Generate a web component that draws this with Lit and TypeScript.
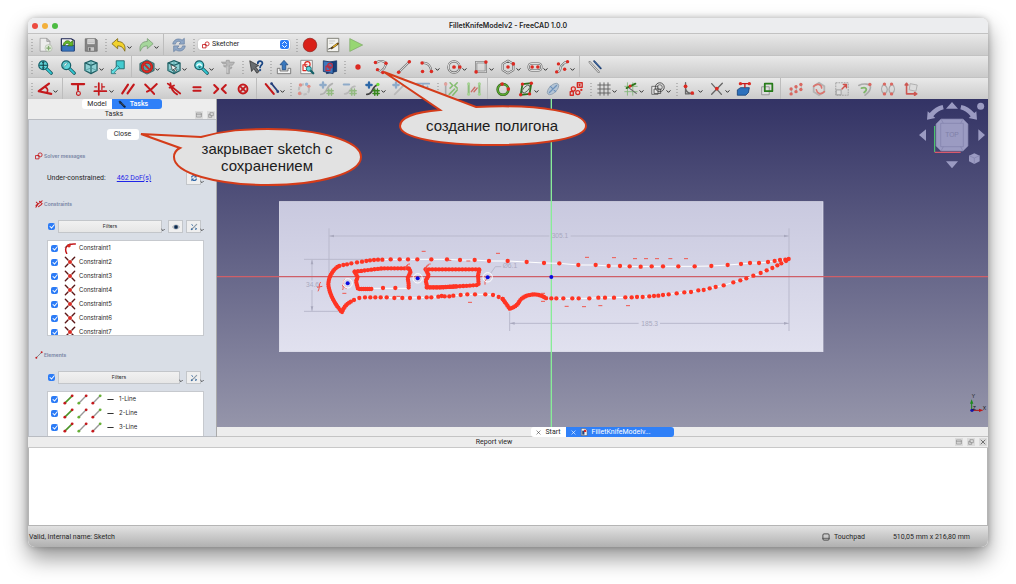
import { LitElement, html, svg, css, TemplateResult, SVGTemplateResult } from "lit";
import { customElement, property } from "lit/decorators.js";

type Glyph = SVGTemplateResult;

const RED = "#c4191c";
const DOT = "#dc2a22";
const INK = "#3a3a3a";

const stroke = (d: string, color = INK, w = 1.2): Glyph =>
  svg`<path d=${d} fill="none" stroke=${color} stroke-width=${w} stroke-linecap="round" stroke-linejoin="round"/>`;
const shape = (d: string, fill: string, line = "none", w = 0.7): Glyph =>
  svg`<path d=${d} fill=${fill} stroke=${line} stroke-width=${w} stroke-linejoin="round"/>`;
const dots = (pts: number[][], r = 1.7, fill = DOT): Glyph =>
  svg`${pts.map(([x, y]) => svg`<circle cx=${x} cy=${y} r=${r} fill=${fill}/>`)}`;
const tube = (d: string, core = "#dedede"): Glyph => svg`${stroke(d, "#5c5c5c", 2.4)}${stroke(d, core, 1.2)}`;
const lens = (inner: Glyph): Glyph => svg`
  ${stroke("M10.5 10.5L16 16", "#155a60", 3.6)}${stroke("M10.8 10.8L15.8 15.8", "#32c9d4", 2)}
  <circle cx="7" cy="7" r="5" fill="#5fd5da" stroke="#176069" stroke-width="1.4"/>${inner}`;
const hashes = (x: number, y: number, c: string): Glyph =>
  stroke(`M${x + 2} ${y}v7M${x + 5} ${y}v7M${x} ${y + 2}h7M${x} ${y + 5}h7`, c, 1.6);
const plus = (c: string): Glyph => stroke("M4.5 1.5v6M1.5 4.5h6", c, 2.6);
const cube: Glyph = svg`${shape("M9 1.8L15.8 4.5V13L9 16.400L2.200 13V4.500Z", "#8fd0d3", "#1f5f64", 1.4)}
  ${stroke("M2.5 4.5L9 7.200L15.5 4.5M9 7.200V16", "#1f5f64", 1.3)}${stroke("M2.500 12.800L9 10L15.500 12.800M9 2V10", "#4a9599", 0.8)}`;

const glyphs: Record<string, Glyph> = {
  new: svg`${shape("M3.5 1.500H11L14.5 5V16H3.5Z", "#ececec", "#8b8b8b")}${shape("M11 1.500V5H14.5Z", "#c9c9c9", "#8b8b8b")}
    <circle cx="13" cy="12.5" r="4" fill="#dfe8da" stroke="#9aa895" stroke-width=".5"/>${stroke("M13 10.5v4M11 12.5h4", "#7fa86c", 1.4)}`,
  open: svg`${shape("M1.500 2H12.500L16 4V15H1.500Z", "#f4f4f4", "#1b2350", 1.3)}${shape("M2 9.500H16V16H2Z", "#3874bd", "#173a75")}
    ${shape("M3.500 9.500C4 4 9.500 2.500 12 6L14.500 4V10H8.500L10.500 8C8.500 6.500 6 7 5.500 9.500Z", "#62b827", "#2b6010")}`,
  save: svg`${shape("M2.500 2H14.500L16 3.500V16H2.500Z", "#858585", "#5f5f5f")}${shape("M4.500 2H13.500V8.500H4.500Z", "#e6e6e6", "#777777")}
    ${shape("M5 11H13V16H5Z", "#c8c8c8", "#6b6b6b")}${shape("M6.500 12H8.500V15.500H6.500Z", "#666")}${stroke("M6 4.500h6M6 6.500h6", "#999", 0.7)}`,
  undo: shape("M1 7.500L7.500 1.800V5C13 5 17 8.500 15.500 16C13.500 11.500 11.500 10 7.500 10V13.200Z", "#f2d22c", "#7a6410", 0.9),
  redo: shape("M17 7.500L10.500 1.800V5C5 5 1 8.500 2.500 16C4.500 11.500 6.500 10 10.500 10V13.200Z", "#a5d69b", "#7b9e76", 0.9),
  refresh: svg`${shape("M2 8C2.500 3 8 .5 12.500 3.500L15 1.500V8H9L11 5.800C8.500 4 5.500 5 5 8Z", "#8fa7c6", "#60799c")}
    ${shape("M16 10C15.500 15 10 17.500 5.500 14.500L3 16.500V10H9L7 12.200C9.500 14 12.500 13 13 10Z", "#8fa7c6", "#60799c")}`,
  update: svg`${shape("M2 8C2.500 3 8 .5 12.500 3.500L15 1.500V8H9L11 5.800C8.500 4 5.500 5 5 8Z", "#2f66a8")}
    ${shape("M16 10C15.500 15 10 17.500 5.500 14.500L3 16.500V10H9L7 12.200C9.500 14 12.500 13 13 10Z", "#2f66a8")}`,
  record: svg`<circle cx="9" cy="9" r="7.600" fill="#d92018" stroke="#8f1d18" stroke-width=".8"/>`,
  macro: svg`${shape("M2.500 1.500H15.500V16.500H2.500Z", "#f2f2ee", "#77776f", 1)}${stroke("M5 4.500h6M5 7h4", "#aaa", 0.7)}
    ${stroke("M7.500 12.500L14.500 7.500", "#6b4c16", 2.400)}${stroke("M9.500 11L13 8.500", "#e5b32c", 1.200)}${stroke("M4 13.500L8 12", "#333", 1)}`,
  play: shape("M2 1.800L16.500 9L2 16.200Z", "#97d672", "#7fa96a", 0.8),
  fit: lens(svg`${stroke("M7 3.200V10.800M3.200 7H10.800", "#123f45", 1.200)}${stroke("M5.900 4.300L7 3.200L8.100 4.300M5.900 9.700L7 10.800L8.100 9.700", "#123f45", 0.9)}`),
  zoomsel: lens(svg`${shape("M4 10L5 5L9.500 4Z", "#e9fbfb", "#1c747a", 0.6)}`),
  iso: cube,
  link: svg`${shape("M7 2H16V11H7Z", "#43cbd0", "#1a6368", 1)}${shape("M1.500 16.500V11.500L3 13L8.500 7.500L10.500 9.500L5 15L6.500 16.500Z", "#63e1e5", "#1a6368", 0.8)}`,
  nodraw: svg`${shape("M9 1L17 5V13L9 17L1 13V5Z", "#4c8d90", "#1c4d50", 0.8)}<circle cx="9" cy="9" r="5.400" fill="#58a3a5" stroke="#8c1515" stroke-width="2.800"/>
    <circle cx="9" cy="9" r="5.400" fill="none" stroke="#dd2a22" stroke-width="1.900"/>${stroke("M5.500 5.500L12.500 12.500", "#d6241f", 2)}`,
  box: svg`${cube}${shape("M5.500 6.500L12 9.500L9.700 10.300L12 13L10.700 14L8.600 11.300L7.300 13.200Z", "#f3f3f3", "#222", 0.7)}`,
  look: lens(svg`${stroke("M4.500 7.500C6 5 8.500 5 9.500 7.500", "#f2ffff", 1.500)}${shape("M5.500 8.500H9.500L7.500 10.500Z", "#14565b")}`),
  caliper: svg`${shape("M7 1.500H10.500V3.500H16V4.500L14 7H10.500V9H13.500L12.500 11H10.500V16.500H7.500V9H5L4 7.500H7.500V5.500H3.500L1.500 3.500H7Z", "#b9b9b9", "#939393")}${stroke("M8 9V15", "#dedede", 0.9)}`,
  help: svg`${shape("M2 2L12 7.500L8.500 8.800L12.500 14L10 16L6.500 10.800L4 14Z", "#686c70", "#333", 0.9)}
    ${stroke("M11 5C11 1.500 16.200 1.500 16.200 4.700C16.200 7 13.600 7 13.600 9.500", "#1a4683", 2)}${dots([[13.6, 12.5]], 1.3, "#1a4683")}`,
  leave: svg`${shape("M1.500 10.500H4.500V13.500H13.500V10.500H16.500V16.500H1.500Z", "#f1f1f1", "#666", 0.9)}
    ${shape("M9 1.500L13.500 6.500H11V12H7V6.500H4.500Z", "#3a78bd", "#1d467c", 0.8)}`,
  viewsketch: svg`${shape("M2 1.500H15V16.500H2Z", "#f7f7f7", "#777", 0.9)}<circle cx="9.500" cy="6" r="3" fill="none" stroke=${DOT} stroke-width="1.300"/>
    ${stroke("M9 6.500H4.500V13H8", DOT, 1.3)}${stroke("M12.500 12.500L16 16", "#156068", 2.600)}<circle cx="11" cy="11" r="2.800" fill="#5bd3d8" stroke="#176069"/>`,
  section: svg`${shape("M5 4L16.500 2V14L5 16.500Z", "#17407c", "#102d60", 0.8)}${shape("M1.500 2L12.500 4V16.500L1.500 14Z", "#3f78bd", "#102d60", 0.9)}
    <circle cx="9" cy="7.500" r="2.600" fill="none" stroke="#c62a3a" stroke-width="1.400"/>${stroke("M4.500 8V13H9V8Z", "#c62a3a", 1.300)}`,
  point: dots([[9, 9]], 3),
  polyline: svg`${tube("M3.500 4.500C7 1 12 2 15 5L12.500 10.500L9 14L5 12")}${dots([[2.7, 4], [14.6, 4.800], [5, 12], [11, 15.200]], 1.9)}`,
  line: svg`${tube("M3 15L15 3")}${dots([[3, 15], [15, 3]], 2)}`,
  arc: svg`${tube("M3.500 4.500C10 3.500 13.500 8 14 14")}${dots([[3.500, 4.500], [4, 14], [14, 14]], 2)}`,
  circle: svg`<circle cx="9" cy="9" r="6.400" fill="none" stroke="#5c5c5c" stroke-width="2.400"/><circle cx="9" cy="9" r="6.400" fill="none" stroke="#dedede" stroke-width="1.200"/>${dots([[9, 9], [15.5, 9]], 2.1)}`,
  rect: svg`${tube("M3.500 3.500H14.500V14.500H3.500Z")}${dots([[14.500, 3.500], [3.500, 14.500]], 2)}`,
  hexagon: svg`${tube("M9 2L15 5.500V12.500L9 16L3 12.500V5.500Z")}${dots([[9, 9], [15, 5.500]], 2)}`,
  slot: svg`${tube("M5.500 5H12.500C17.500 5 17.500 13 12.500 13H5.500C.5 13 .5 5 5.500 5Z")}${dots([[5.800, 9], [12.200, 9]], 2)}`,
  spline: svg`${tube("M3 14.500C9 15 6 9 8.500 7.500C11 6 10 3.500 15 3.500")}${dots([[3, 14.500], [15.200, 3], [5, 5.500], [12, 11.500]], 1.9)}`,
  construction: svg`${tube("M3 3.500L13 14.500")}${stroke("M8 2.500L15.500 10.500", "#1b3768", 2)}${stroke("M8.500 3L15 10", "#4f87c7", 0.8)}`,
  dimension: svg`${stroke("M13.500 3L2 11.500L16 14.500", RED, 2.500)}${stroke("M9.500 7C12.500 8.500 12.500 11.500 11 13", RED, 1.800)}`,
  coincident: svg`${stroke("M2 3.500H16M9 3.500V10", RED, 2.300)}<circle cx="9.500" cy="14" r="2.200" fill="none" stroke=${RED} stroke-width="1.200"/>`,
  hv: svg`${stroke("M6.500 2.500V15.500M1.500 11.500H15", RED, 2)}${stroke("M2 6.500H4M10 6.500H13M10 3V9.500", RED, 1.400)}`,
  parallel: stroke("M2.500 14L9 4M8.500 14L15.500 4", RED, 2.400),
  perpendicular: stroke("M2.500 4L8.500 10M15.500 3.500L8.500 10L4.500 12M8.500 10L12.500 14.500", RED, 2.300),
  tangent: stroke("M2 3L16 14M5 2.500C5 8 8.500 13 12.500 15M9 5L4 7.500", RED, 2),
  equal: stroke("M5 7H13M5 11H13", RED, 2.300),
  symmetric: stroke("M2.500 4.500L7 9L2.500 13.500M15.500 4.500L11 9L15.500 13.500", RED, 2.300),
  block: svg`<circle cx="9" cy="9" r="5" fill="none" stroke=${RED} stroke-width="2.200"/>${stroke("M6.500 6.500L11.500 11.500M11.500 6.500L6.500 11.500", RED, 2)}`,
  toggle: svg`${stroke("M2 3.500L11 14.500", RED, 2.400)}${stroke("M8.500 3L15.500 11.500", "#26407c", 2)}${dots([[8.500, 3], [15.500, 12]], 1.500, "#26407c")}`,
  dof: svg`<circle cx="9" cy="9.500" r="5.700" fill="none" stroke="#bdbdbd" stroke-width="2.400" stroke-dasharray="4 1.500"/>${dots([[5, 4.500], [14.500, 6], [4, 14]], 1.900, "#e28e86")}${dots([[12, 3.5]], 1.800, "#8fb3d8")}`,
  knotplus: svg`${plus("#8fabc9")}${stroke("M2 15C10 15 7 6 15 3", "#b0b0b0", 2)}${hashes(9, 9, "#93ba82")}`,
  knotminus: svg`${stroke("M2 4h6", "#8fabc9", 2.400)}${stroke("M3 14.500C10 15 8 6 14.500 6", "#b9b9b9", 2)}${hashes(9, 9, "#93ba82")}`,
  knot: svg`${plus("#2c68a8")}${stroke("M2 15C10 15 7 6 14 4.500", "#444", 2)}${dots([[14.5, 4]], 1.900, "#6fdc3a")}${hashes(9, 9, "#35861b")}`,
  mulplus: svg`${plus("#8fabc9")}${stroke("M3 15L10 8L15 3", "#b9b9b9", 2)}${dots([[14, 4]], 1.700, "#9ccf83")}`,
  mulminus: svg`${stroke("M2 3h14M4 6v5M9 5v5M14 6v6", "#8fabc9", 2)}`,
  autocons: svg`${stroke("M3 2V16", "#aaa", 1.800)}${stroke("M8 2L11 5L8 8M16 2L13 5L16 8M7 15L13 9M11 16L16 10", "#86bd72", 1.800)}${dots([[3, 3.5]], 2, "#e2a19c")}`,
  redundant: svg`${stroke("M3 3V15M15 3V15", "#8cbe7a", 2.300)}${stroke("M6 12L10 7M9 12L12.500 8", "#cc6d68", 1.600)}${dots([[3, 3], [15, 3], [3, 15], [15, 15]], 1.700, "#a6d394")}`,
  periodic: svg`<circle cx="9" cy="9.500" r="6" fill="none" stroke="#36611f" stroke-width="3"/><circle cx="9" cy="9.500" r="6" fill="none" stroke="#5cad31" stroke-width="1.500"/>${dots([[8, 3.500], [15, 9]], 2)}`,
  internal: svg`${stroke("M5 3.500L15 2.500L13 14.500L3 15.500Z", "#2c701b", 2)}<ellipse cx="9" cy="9" rx="5.500" ry="2.600" transform="rotate(-45 9 9)" fill="#d7ddd5" stroke="#535b50"/>${dots([[5, 3.500], [15, 2.500], [13, 14.500], [3, 15.500]], 1.900)}`,
  ellipse: svg`<ellipse cx="9" cy="9" rx="8" ry="4.200" transform="rotate(-45 9 9)" fill="#b4c5d6" stroke="#90a0b0"/>${stroke("M5 13L13 5M6 6L12 12", "#6f93bb", 1.400)}`,
  hide: svg`${stroke("M10.500 2H16V7H10.500ZM2.500 12H6V16H2.500Z", "#d32b26", 1.500)}<circle cx="6" cy="9" r="2.300" fill="#f3cbc6" stroke="#d32b26" stroke-width="1.400"/><circle cx="11" cy="13" r="2.300" fill="#f3cbc6" stroke="#d32b26" stroke-width="1.400"/>${dots([[13, 4.500], [15, 10]], 1.3)}`,
  grid: stroke("M4.500 2V16M9 2V16M13.500 2V16M2 4.500H16M2 9H16M2 13.500H16", "#5e5e5e", 1),
  snap: svg`${stroke("M5 2V16M11 2V16M2 6H16M2 12H16", "#83b77b", 1)}${stroke("M4 8L14 3", "#2d751b", 2)}${stroke("M7 8L15 14", "#666", 1.200)}${dots([[8, 5.500]], 1.700)}`,
  order: svg`${shape("M2 6H9V15H2Z", "#e8e8e8", "#555", 0.9)}<circle cx="11" cy="7" r="5" fill="none" stroke="#444"/><circle cx="11" cy="7" r="2.800" fill="none" stroke="#555" stroke-width=".9"/>${stroke("M5 9H12V14H5Z", "#444", 0.9)}`,
  fillet: svg`${stroke("M4 2V8C4 12 8 14.500 13 14.500M4 8V14.500H8", "#676767", 1.500)}${dots([[4, 6], [11.500, 13.500]], 2.100)}`,
  trim: svg`${stroke("M3 3L14 15M15 2.500L3 15", "#676767", 1.500)}${dots([[8.8, 8.5]], 2.100)}`,
  external: svg`${shape("M1.500 10L5 7.500H15L14 13L11 16H1.500Z", "#2c70bc", "#153f74", 0.9)}${stroke("M5 3H15M10 3V7", RED, 1.500)}${dots([[5, 3], [15, 3]], 1.900)}`,
  carbon: svg`${shape("M3 6.500H11.500V15.500H3Z", "#dedede", "#888", 0.9)}${stroke("M6.500 3H15V11.500H6.500Z", "#277b1a", 2)}`,
  array: svg`${stroke("M4 14V9M9.500 12V5M15 9V3", "#b7b7b7", 1.200)}${dots([[3.500, 14.500], [3.500, 9], [9, 12], [9, 6.500], [14.500, 9.500], [14.500, 4]], 1.900, "#d96861")}`,
  rotate: svg`<path d="M9 2L15 6V12L9 16L3 12V6Z" fill="none" stroke="#b3b3b3" stroke-width="2"/>${stroke("M3 6C7 2 12 4 12 8M15 12C11 16 7 14 6 10", "#dc746e", 1.800)}`,
  scale: svg`<path d="M2 2H16V16H2Z" fill="none" stroke="#999" stroke-dasharray="2 1"/><path d="M2.500 10H8V15.500H2.500Z" fill="#ddd" stroke="#999"/>${stroke("M9 9L14 4M10.500 4H14V7.500", "#cf514b", 1.600)}`,
  offset: svg`${stroke("M2 5C8 2 14 4 15 5C16 10 12 14 9 16", "#aaa", 1.800)}${stroke("M5 8C11 6 12 10 8 13", "#80b66b", 2)}${dots([[14.5, 4]], 1.900, "#d96861")}`,
  mirror: svg`${stroke("M4 4C1 7 1 11 4 14M14 4C17 7 17 11 14 14M6 5C9 8 9 11 6 14M12 5C9.500 8 9.500 11 12 14", "#aaa", 1.400)}${dots([[5, 3.500], [13, 3.500], [5, 14.500], [13, 14.500]], 1.900, "#d96861")}`,
  carbonaxis: svg`${stroke("M4 3V14.500H15M2.500 4.500L4 2.500L5.500 4.500M13 13L15.500 14.500L13 16", "#cc5752", 1.800)}${shape("M8 3L16 4.500L14.500 11.500L7 10Z", "#dcdcdc", "#aaa", 1)}`,
  sketcher: svg`<circle cx="11.500" cy="6.500" r="4.500" fill="none" stroke=${RED} stroke-width="1.900"/>${stroke("M2 8H9V15.500H2Z", RED, 1.900)}${stroke("M9 8H6", RED, 1.300)}`,
  constraints: svg`${stroke("M2 16L8 8L16 2M3 5L7 9L2 12M10 3L16 8M8 15L15 10", RED, 2.300)}`,
  element: svg`${stroke("M3 15L15 3", "#747474", 1.800)}${dots([[3, 15], [15, 3]], 2.200, RED)}`,
  tangentarc: svg`${stroke("M4 17C0 10 4 2 17 3", RED, 2.200)}${stroke("M2 8C4 5 6 4 9 3", "#571313", 1.300)}${dots([[7.5, 5.5]], 2.600)}`,
  cross: svg`${stroke("M2 2L6 6M16 2L12 6M2 16L6 12M16 16L12 12", "#5b1717", 2.100)}${dots([[9, 9]], 3)}`,
  edge: svg`${stroke("M3 15L15 3", "#4c9428", 2.600)}${dots([[3, 15], [15, 3]], 2.300, RED)}`,
  startpt: svg`${stroke("M3 15L15 3", "#999", 2.300)}${dots([[3, 15]], 2.300, "#67af38")}${dots([[15, 3]], 2.300, RED)}`,
  endpt: svg`${stroke("M3 15L15 3", "#999", 2.300)}${dots([[3, 15]], 2.300, RED)}${dots([[15, 3]], 2.300, "#67af38")}`,
  dash: stroke("M2 9H16", "#222", 2.400),
  eye: svg`${shape("M1 9C5 3 13 3 17 9C13 15 5 15 1 9Z", "#d9dde2", "#777", 1)}<circle cx="9" cy="9" r="4.600" fill="#23466e"/><circle cx="9" cy="9" r="2" fill="#0c1c2e"/>`,
  wand: svg`${stroke("M3 15L15 3", "#8a98a5", 2.400)}${stroke("M4 3L6 6M12 11L14 14M12 15L15 12", "#3b6c9f", 1.800)}${dots([[4, 14]], 2, "#3b6c9f")}`,
  wrench: svg`${stroke("M4 4L15 15", "#0d2340", 4.600)}${stroke("M4 3V8", "#30465f", 2)}${stroke("M8 7L14 13", "#888", 1.200)}`,
  float: svg`${stroke("M2 3H16V15H2ZM2 8H16", "#777", 1.600)}`,
  restore: svg`${stroke("M7 2H16V11H7ZM7 7H2V16H11V11", "#777", 1.600)}`,
  close: stroke("M3 3L15 15M15 3L3 15", "#333", 1.900),
  closelight: stroke("M3 3L15 15M15 3L3 15", "#fff", 2.200),
  touchpad: svg`<rect x="2" y="2" width="14" height="14" rx="2.500" fill="none" stroke="#333" stroke-width="1.800"/>${stroke("M2 12H16", "#333", 1.500)}`,
  file: svg`${shape("M3 1H12L16 5V17H3Z", "#eee", "#444", 1)}${shape("M5 6H10V15H5Z", "#23457e")}${shape("M9 4H14V9H9Z", "#d32d25")}`,
  chevron: stroke("M3 6L9 12L15 6", "#222", 3.400),
  updown: stroke("M5 7L9 3L13 7M5 11L9 15L13 11", "#fff", 2),
};

@customElement("cad-icon")
class CadIcon extends LitElement {
  @property() name = "";
  static styles = css`
    :host { display: block; width: 18px; height: 18px; flex: none; }
    .art { display: block; width: 100%; height: 100%; }
  `;
  render() {
    return html`<svg class="art" viewBox="0 0 18 18" aria-hidden="true">${glyphs[this.name]}</svg>`;
  }
}

/* Toolbar entries: "|" is a divider, ":" a drag handle, "-" the slotted field, and "/v" marks a drop-down. */
const viewBar = ": fit zoomsel iso/v link | nodraw/v box/v look/v caliper : help : leave viewsketch section : point polyline line arc/v circle/v rect/v hexagon/v slot/v spline/v | construction";
const constraintBar = ": dimension/v | coincident hv/v parallel perpendicular tangent equal symmetric block | toggle/v : dof knotplus knotminus knot/v mulplus mulminus : autocons redundant | periodic internal/v ellipse hide : grid/v snap/v order/v : fillet/v trim/v external carbon | array rotate scale offset mirror carbonaxis";

@customElement("cad-toolbar")
class CadToolbar extends LitElement {
  @property() items = "";
  static styles = css`
    :host { display: flex; align-items: center; height: 22px; flex: none; box-sizing: border-box; overflow: hidden;
      background: linear-gradient(#e9e9e9, #cbcbcb); border-top: 1px solid #c2c2c2; }
    .tool { display: flex; align-items: center; justify-content: center; width: 23px; height: 20px; padding: 0;
      border: 0; background: none; flex: none; }
    .menu { width: 27px; }
    .arrow { width: 5px; height: 5px; margin: 6px -1px 0 0; }
    .pic { width: 16px; height: 16px; }
    .handle { width: 5px; height: 14px; flex: none; }
    .divider { width: 6px; align-self: stretch; flex: none; background: linear-gradient(#bdbdbd, #bdbdbd) 2px 0 / 1px 100% no-repeat; }
  `;
  private entry(item: string): TemplateResult {
    if (item === ":")
      return html`<svg class="handle" viewBox="0 0 5 14" aria-hidden="true"><path d="M4 1V14" stroke="#8d8d8d" stroke-dasharray="1 2"/></svg>`;
    if (item === "|") return html`<span class="divider"></span>`;
    if (item === "-") return html`<slot></slot>`;
    const [name, menu] = item.split("/");
    return html`<button class="tool ${menu ? "menu" : ""}" aria-label=${name}>
      <cad-icon class="pic" name=${name}></cad-icon>${menu ? html`<cad-icon class="arrow" name="chevron"></cad-icon>` : ""}
    </button>`;
  }
  render() {
    return this.items.split(" ").map((i) => this.entry(i));
  }
}

/* Sketch geometry, three drawing units to one screen pixel. */
const spine = [
  [337, 209], [362, 208], [389, 208], [414, 208], [442, 208], [484, 208], [531, 208], [570, 210], [614, 210], [657, 213],
  [713, 213], [770, 216], [822, 219], [868, 220], [925, 225], [977, 225], [1016, 228], [1050, 228], [1079, 229], [1112, 230],
  [1145, 229], [1179, 229], [1225, 229], [1274, 229], [1324, 228], [1373, 225], [1413, 222], [1440, 219], [1467, 219],
  [1494, 216], [1514, 213], [1530, 210], [1546, 209], [1556, 207],
];
const butt = [[324, 209], [312, 210], [300, 211], [289, 213], [276, 215], [261, 217], [244, 220], [231, 223], [220, 225], [208, 228]];
const belly = [
  [252, 330], [268, 324], [285, 322], [301, 322], [316, 322], [332, 322], [350, 322], [373, 324], [397, 324], [420, 324],
  [447, 323], [470, 322], [484, 322], [505, 320], [515, 318], [524, 319], [538, 319], [550, 317], [572, 315], [592, 313],
  [615, 313], [646, 313], [669, 315], [686, 321], [698, 327],
];
const edge = [
  [844, 325], [859, 325], [880, 325], [907, 325], [926, 325], [958, 325], [985, 323], [1005, 323], [1032, 323], [1066, 322],
  [1085, 322], [1101, 321], [1118, 321], [1138, 319], [1152, 318], [1165, 317], [1179, 315], [1196, 313], [1220, 310],
  [1243, 307], [1263, 306], [1285, 301], [1301, 300], [1319, 295], [1337, 291], [1361, 286], [1390, 277], [1411, 271],
  [1429, 265], [1450, 257], [1472, 249], [1490, 241], [1507, 234], [1522, 226], [1534, 220], [1548, 213],
];
const slots = [[339, 294], [376, 294]];
const ticks = [
  [461, 184], [684, 190], [595, 213], [600, 337], [890, 349], [223, 310], [951, 202], [1032, 203], [1095, 206], [1128, 206],
  [1161, 206], [1201, 206], [1248, 206], [942, 350], [991, 347], [1074, 347], [819, 334], [819, 310], [385, 319], [538, 211],
];
const arcs = ["M144 304C150 296 146 280 152 276M141 292L157 289", "M218 300C222 290 216 276 224 268M216 286L230 296", "M407 240C407 228 410 222 420 222M405 232L414 226", "M467 242C468 230 470 222 482 222M466 232L476 226", "M645 284V272L650 268"];
const anchors = [[233, 280], [443, 265], [653, 262]];
const line = (pts: number[][]) => pts.map((p) => p.join(",")).join(" ");

@customElement("cad-viewport")
class CadViewport extends LitElement {
  static styles = css`
    :host { display: block; min-height: 0; overflow: hidden; background: linear-gradient(#333365, #9595aa); }
    .scene { display: block; width: 100%; height: 100%; }
    .bead { fill: none; stroke: #ff3423; stroke-width: 13; stroke-linecap: round; stroke-linejoin: round; stroke-dasharray: 0 6; }
    .loose { stroke-dasharray: 0 10; }
    .wire { fill: none; stroke: #fff; stroke-width: 3; }
    .measure { fill: none; stroke: #b9b9cc; stroke-width: 3; }
    .value { font: 20px "Liberation Sans", Arial, sans-serif; fill: #a9a9be; }
    .tick { stroke: #f0574e; stroke-width: 3; fill: none; }
    .nav { fill: #9b9bc2; }
    .facet { fill: none; stroke: #8181ab; stroke-width: 2; }
    .face { font: 20px "Liberation Sans", Arial, sans-serif; fill: #8080a8; }
    .axis { font: 15px "Liberation Sans", Arial, sans-serif; fill: #111; }
  `;
  render() {
    return html`<svg class="scene" viewBox="-159 -273 2313 984" preserveAspectRatio="xMidYMid slice">
      <defs><linearGradient id="sheet" x1="0" y1="0" x2="0" y2="1"><stop offset="0" stop-color="#c9c9df"/><stop offset="1" stop-color="#e1e1ef"/></linearGradient></defs>
      <rect x="28" y="35" width="1631" height="450" fill="url(#sheet)" stroke="#e8e8f4" stroke-width="2"/>
      <path class="measure" d="M177 115V265M177 138H838M902 138H1557M1557 115V423M102 208H337M126 208V272M126 300V364M102 364H216M719 365V423M719 400H1106M1170 400H1557M662 250L676 230H694"/>
      <path d="M178 138l14-4v8zM1556 138l-14-4v8zM720 400l14-4v8zM1556 400l-14-4v8zM126 209l-4 14h8zM126 363l-4-14h8z" fill="#a8a8bd"/>
      <text class="value" x="845" y="145">305.1</text><text class="value" x="1114" y="407">185.3</text>
      <text class="value" x="108" y="292">34.6</text><text class="value" x="698" y="235">Ø6.1</text>
      <path d="M-200 260H2300" stroke="#cf5f68" stroke-width="4"/>
      <path d="M844 -300V800" stroke="#88ec98" stroke-width="4"/>
      <polyline class="wire" points=${line(spine)}/><polyline class="wire" points=${line(belly)}/>
      <polyline class="wire" points=${line(edge)}/><path class="wire" d="M264 295H416"/>
      <path class="bead" d="M202 231Q176 252 175 284Q180 325 216 367Q222 346 244 334"/>
      <path class="bead" d="M698 327L719 356Q736 352 746 338Q757 315 795 313Q815 315 832 327"/>
      <path class="bead" d="M254 245L263 262L258 274L264 297H308M417 236L422 245L413 264L416 282V297"/>
      <path class="bead loose" d="M254 245L296 240L337 235H417M467 238H628M470 292H520L626 285"/>
      <path class="bead" d="M628 240L624 256L626 285M467 238L476 256L467 272L472 292H510L560 289"/>
      ${[...spine, ...butt, ...belly, ...edge, ...slots].map(([x, y]) => svg`<circle cx=${x} cy=${y} r="6.500" fill="#ff3423"/>`)}
      ${ticks.map(([x, y]) => svg`<path class="tick" d="M${x - 6} ${y}h12"/>`)}
      ${arcs.map((d) => svg`<path class="tick" d=${d}/>`)}
      ${anchors.map(([x, y]) => svg`<circle class="wire" cx=${x} cy=${y} r="14"/>`)}
      ${[...anchors, [844, 261]].map(([x, y]) => svg`<circle cx=${x} cy=${y} r="6" fill="#0b0be0"/>`)}
      <g transform="translate(930 -360)">
        <path class="nav" d="M1083 147H1149L1164 162V228L1149 243H1083L1068 228V162Z"/>
        <path class="facet" d="M1083 147H1149L1164 162V228L1149 243H1083L1068 228V162ZM1082 160H1150V230H1082ZM1083 147L1090 160M1149 147L1142 160M1083 243L1090 230M1149 243L1142 230"/>
        <text class="face" x="1116" y="202" text-anchor="middle">TOP</text>
        <path class="nav" d="M1116 96L1134 116H1098ZM1116 295L1134 274H1098ZM1017 195L1038 178V213ZM1215 195L1195 178V213ZM1041 149L1043 124L1049 129Q1066 110 1088 105L1091 118Q1073 123 1060 139L1066 144ZM1191 149L1189 124L1183 129Q1166 110 1144 105L1141 118Q1159 123 1172 139L1166 144Z"/>
        <circle class="nav" cx="1202" cy="109" r="10.500"/>
        <path class="nav" d="M1183 250L1199 257V274L1183 282L1167 274V257Z"/><path class="facet" d="M1167 257L1183 264L1199 257M1183 264V282"/>
        <path d="M1064 168V246" stroke="#4fdc6e" stroke-width="3"/><path d="M1064 247H1142" stroke="#d9596c" stroke-width="4"/>
      </g>
      <g transform="translate(738 570)">
        <path d="M1367 91V66" stroke="#1c8a1c" stroke-width="3"/><path d="M1367 58l5 13h-10z" fill="#1c8a1c"/>
        <path d="M1367 91H1392" stroke="#a81414" stroke-width="3"/><path d="M1402 91l-13-5v10z" fill="#c01414"/>
        <circle cx="1368" cy="91" r="5" fill="#1515a8"/>
        <text class="axis" x="1367" y="55">Y</text><text class="axis" x="1400" y="91">X</text><text class="axis" x="1370" y="90">Z</text>
      </g>
    </svg>`;
  }
}

@customElement("app-root")
class AppRoot extends LitElement {
  static styles = css`
    :host { display: block; position: relative; height: 100vh; box-sizing: border-box; padding: 18px 28px 37px; background: #fff;
      font: 7px/10px Roboto, Inter, "Noto Sans", sans-serif; color: #262626; overflow: hidden; }
    button, select, input { font: inherit; color: inherit; margin: 0; box-sizing: border-box; }
    .window { height: 100%; display: flex; flex-direction: column; border-radius: 7px; overflow: hidden; background: #ececec; }
    .shadow { height: 100%; border-radius: 7px; box-shadow: 0 11px 22px rgba(0,0,0,.42), 0 0 6px rgba(0,0,0,.25); }
    .title { flex: none; height: 15px; display: grid; grid-template-columns: 1fr auto 1fr; align-items: center; background: #ecedef;
      font: 600 7px/10px Inter, sans-serif; }
    .lights { display: flex; gap: 4px; padding-left: 4px; }
    .light { width: 6px; height: 6px; border-radius: 50%; background: #ec4b40; }
    .light.amber { background: #f3b03b; }
    .light.green { background: #4cbb42; }
    .combo { display: flex; align-items: center; gap: 2px; width: 92px; height: 11px; margin: 0 3px; padding: 0 1px 0 4px; flex: none;
      box-sizing: border-box; background: #fff; border-radius: 3px; box-shadow: 0 0 1px rgba(0,0,0,.4); }
    .combo select { appearance: none; border: 0; padding: 0; background: none; flex: 1; height: 11px; line-height: 11px; }
    .small { width: 8px; height: 8px; }
    .stepper { width: 9px; height: 9px; border-radius: 2px; background: #2b7bf6; }
    .main { flex: 1; min-height: 0; display: flex; }
    .side { width: 189px; flex: none; display: flex; flex-direction: column; border-right: 1px solid #aaa; box-sizing: border-box; }
    .center { flex: 1; min-width: 0; display: flex; flex-direction: column; }
    .center cad-viewport { flex: 1; }
    .tabs { display: flex; justify-content: center; flex: none; height: 11px; background: #ededed; }
    .tabs.docs { height: 10px; border-bottom: 1px solid #c4c4c4; box-sizing: border-box; }
    .tab { display: flex; align-items: center; gap: 4px; border: 0; padding: 0 5px; background: #fff; height: 10px; line-height: 9px; }
    .tab.first { border-radius: 3px 0 0 3px; }
    .tab.on { background: #2f80f8; color: #fff; border-radius: 0 3px 3px 0; }
    .tab.tasks { width: 50px; padding: 0 6px; font-weight: 500; }
    .tab.doc { width: 108px; }
    .tiny { width: 5px; height: 5px; }
    .head { flex: none; height: 9px; display: flex; align-items: center; gap: 4px; padding: 0 1px 0 9px; background: #ededed; line-height: 9px; }
    .head.report { height: 10px; border-bottom: 1px solid #c8c8c8; }
    .name { flex: 1; text-align: center; }
    .mini { width: 8px; height: 8px; padding: 0; border: 0; background: #dcdcdc; display: grid; place-items: center; }
    .glyph { width: 6px; height: 6px; }
    .panel { flex: 1; min-height: 0; overflow: hidden; padding: 9px 12px 0 6px; background: #d9dee6; border: 1px solid #b9bcc2; border-right: 0; box-sizing: border-box;
      display: flex; flex-direction: column; }
    .close { align-self: center; width: 32px; height: 11px; margin-left: 6px; padding: 0; border: 0; border-radius: 3px; background: #fff; line-height: 11px; flex: none; }
    .section { display: flex; align-items: center; gap: 1px; height: 10px; margin: 0; font: 600 5px/10px Inter, sans-serif; color: #7783a3; flex: none; }
    .solver { margin-top: 11px; }
    .rules { margin-top: 14px; }
    .parts { margin-top: 14px; }
    .status { display: flex; align-items: center; gap: 11px; height: 14px; margin: 10px 0 0 12px; flex: none; }
    .status a { color: #1f25e8; }
    .square { display: grid; place-items: center; width: 15px; height: 13px; padding: 0; border: 1px solid #c3c6ca; background: #efefef; flex: none; }
    .status .square { margin-left: auto; }
    .status .arrow { margin-left: -12px; }
    .filters { display: flex; align-items: center; height: 13px; margin: 11px 0 7px 13px; gap: 3px; flex: none; }
    .filter { flex: 1; height: 13px; padding: 0; border: 1px solid #c3c6ca; background: linear-gradient(#f1f1f1, #e6e6e6); font: 5px/11px Inter, sans-serif; }
    .arrow { width: 4px; height: 4px; align-self: flex-end; margin: 0 0 1px -4px; }
    .check { appearance: none; width: 7px; height: 7px; border-radius: 2px; background: #2b7bf6; display: grid; place-items: center; flex: none; }
    .check:checked::after { content: ""; width: 2px; height: 4px; border: solid #fff; border-width: 0 1px 1px 0; transform: rotate(40deg) translate(0, -1px); }
    .list { list-style: none; margin: 0 0 0 12px; padding: 0 0 0 3px; height: 96px; overflow: hidden; background: #fff; border: 1px solid #c6c9ce; box-sizing: border-box; flex: none;
      font: 6px/10px Inter, sans-serif; }
    .list.grow { flex: 1; height: auto; min-height: 0; border-bottom: 0; }
    .row { display: flex; align-items: center; height: 14px; gap: 6px; }
    .row.thing { gap: 5px; }
    .mark { width: 12px; height: 12px; }
    .row label { display: flex; align-items: center; gap: 3px; }
    .seg { width: 11px; height: 11px; }
    .row .type { width: 7px; height: 7px; margin: 0 2px; }
    .log { flex: none; height: 78px; resize: none; border: solid #b5b5b5; border-width: 0 1px 1px; outline: 0; background: #fff; padding: 2px; box-sizing: border-box; display: block; width: 100%; }
    .foot { flex: none; height: 21px; display: flex; align-items: center; padding: 0 18px 0 1px; background: linear-gradient(#e2e2e2, #b0b0b0); }
    .foot .pad { display: flex; align-items: center; gap: 4px; margin-left: auto; margin-right: 28px; }
    .note { position: absolute; overflow: visible; pointer-events: none; }
    .note path { fill: #e2e2e2; stroke: #d43c1a; stroke-width: 2; stroke-linejoin: miter; }
    .note text { font: 15px "Liberation Sans", Arial, sans-serif; fill: #1c1c1c; text-anchor: middle; }
    .closing { left: 138px; top: 126px; width: 226px; height: 62px; }
    .polygon { left: 380px; top: 68px; width: 210px; height: 80px; }
  `;

  private filterRow(id: string, withEye: boolean) {
    return html`<div class="filters">
      <input class="check" type="checkbox" id=${id} aria-label="Filter on" checked />
      <button class="filter">Filters</button><cad-icon class="arrow" name="chevron"></cad-icon>
      ${withEye ? html`<button class="square" aria-label="Visibility"><cad-icon class="small" name="eye"></cad-icon></button>` : ""}
      <button class="square" aria-label="Settings"><cad-icon class="small" name="wand"></cad-icon></button><cad-icon class="arrow" name="chevron"></cad-icon>
    </div>`;
  }

  private mini(name: string) {
    return html`<button class="mini" aria-label=${name}><cad-icon class="glyph" name=${name}></cad-icon></button>`;
  }

  render() {
    return html`
      <div class="shadow"><div class="window">
        <header class="title"><span class="lights"><i class="light"></i><i class="light amber"></i><i class="light green"></i></span>
          <span>FilletKnifeModelv2 - FreeCAD 1.0.0</span></header>
        <cad-toolbar items=": new open save : undo/v redo/v | refresh : - : record macro play">
          <label class="combo"><cad-icon class="small" name="sketcher"></cad-icon>
            <select aria-label="Workbench"><option>Sketcher</option></select>
            <cad-icon class="stepper" name="updown"></cad-icon></label>
        </cad-toolbar>
        <cad-toolbar items=${viewBar}></cad-toolbar>
        <cad-toolbar items=${constraintBar}></cad-toolbar>
        <div class="main">
          <aside class="side">
            <nav class="tabs"><button class="tab first">Model</button>
              <button class="tab on tasks"><cad-icon class="small" name="wrench"></cad-icon>Tasks</button></nav>
            <div class="head"><span class="name">Tasks</span>${this.mini("float")}${this.mini("restore")}</div>
            <div class="panel">
              <button class="close">Close</button>
              <h2 class="section solver"><cad-icon class="small" name="sketcher"></cad-icon>Solver messages</h2>
              <div class="status"><span>Under-constrained:</span><a href="#dof">462 DoF(s)</a>
                <button class="square" aria-label="Update"><cad-icon class="small" name="update"></cad-icon></button><cad-icon class="arrow" name="chevron"></cad-icon></div>
              <h2 class="section rules"><cad-icon class="small" name="constraints"></cad-icon>Constraints</h2>
              ${this.filterRow("filter-constraints", true)}
              <ul class="list">${[1, 2, 3, 4, 5, 6, 7].map((n) => html`<li class="row">
                <input class="check" type="checkbox" id="c${n}" checked /><label for="c${n}"><cad-icon class="mark" name=${n === 1 ? "tangentarc" : "cross"}></cad-icon>Constraint${n}</label></li>`)}</ul>
              <h2 class="section parts"><cad-icon class="small" name="element"></cad-icon>Elements</h2>
              ${this.filterRow("filter-elements", false)}
              <ul class="list grow">${["1-Line", "2-Line", "3-Line", ""].map((t, n) => html`<li class="row thing">
                <input class="check" type="checkbox" id="e${n}" aria-label="Element" checked /><label for="e${n}"><cad-icon class="seg" name="edge"></cad-icon><cad-icon class="seg" name="startpt"></cad-icon><cad-icon class="seg" name="endpt"></cad-icon><cad-icon class="type" name="dash"></cad-icon>${t}</label></li>`)}</ul>
            </div>
          </aside>
          <section class="center">
            <cad-viewport></cad-viewport>
            <nav class="tabs docs"><button class="tab first"><cad-icon class="tiny" name="close"></cad-icon>Start</button>
              <button class="tab on doc"><cad-icon class="tiny" name="closelight"></cad-icon><cad-icon class="small" name="file"></cad-icon>FilletKnifeModelv...</button></nav>
          </section>
        </div>
        <div class="head report"><span class="name">Report view</span>${this.mini("float")}${this.mini("restore")}${this.mini("close")}</div>
        <textarea class="log" aria-label="Report view" readonly></textarea>
        <footer class="foot"><span>Valid, Internal name: Sketch</span>
          <span class="pad"><cad-icon class="small" name="touchpad"></cad-icon>Touchpad</span><span>510,05 mm x 216,80 mm</span></footer>
      </div></div>
      <svg class="note closing" viewBox="138 126 226 62">
        <path d="M141 134L201 137C226 130 245 129 268 129C320 129 361 141 361 157C361 173 320 185 268 185C216 185 174 173 174 157C174 153 176 150 180 148Z"/>
        <text x="267" y="154">закрывает sketch с</text><text x="267" y="171">сохранением</text>
      </svg>
      <svg class="note polygon" viewBox="380 68 210 80">
        <path d="M384 72L476 107C540 104 586 112 586 126C586 138 545 145 493 145C441 145 400 138 400 126C400 118 414 112 440 110Z"/>
        <text x="492" y="131">создание полигона</text>
      </svg>`;
  }
}
